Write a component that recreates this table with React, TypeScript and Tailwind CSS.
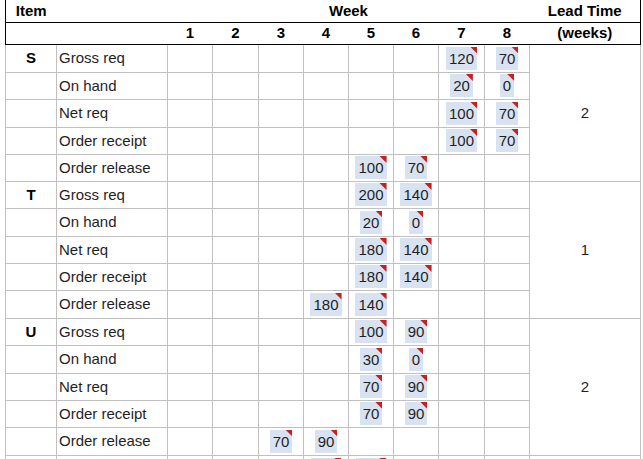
import React from 'react';

type Row = { label: string; values: Record<number, number> };
type Item = { name: string; lead: number; rows: Row[] };

// MRP record for items S, T, U
const items: Item[] = [
  {
    name: 'S',
    lead: 2,
    rows: [
      { label: 'Gross req', values: { 7: 120, 8: 70 } },
      { label: 'On hand', values: { 7: 20, 8: 0 } },
      { label: 'Net req', values: { 7: 100, 8: 70 } },
      { label: 'Order receipt', values: { 7: 100, 8: 70 } },
      { label: 'Order release', values: { 5: 100, 6: 70 } },
    ],
  },
  {
    name: 'T',
    lead: 1,
    rows: [
      { label: 'Gross req', values: { 5: 200, 6: 140 } },
      { label: 'On hand', values: { 5: 20, 6: 0 } },
      { label: 'Net req', values: { 5: 180, 6: 140 } },
      { label: 'Order receipt', values: { 5: 180, 6: 140 } },
      { label: 'Order release', values: { 4: 180, 5: 140 } },
    ],
  },
  {
    name: 'U',
    lead: 2,
    rows: [
      { label: 'Gross req', values: { 5: 100, 6: 90 } },
      { label: 'On hand', values: { 5: 30, 6: 0 } },
      { label: 'Net req', values: { 5: 70, 6: 90 } },
      { label: 'Order receipt', values: { 5: 70, 6: 90 } },
      { label: 'Order release', values: { 3: 70, 4: 90 } },
    ],
  },
];

const weekWidths = [45, 46, 45, 45, 45, 45, 46, 45];
const rowHeights = [28, 27, 28, 27, 27, 27, 28, 27, 27, 28, 27, 28, 27, 27, 28];

function Chip({ value }: { value: number }) {
  return (
    <span className="relative inline-block bg-[#d8e2f1] px-[3px] leading-[23px]">
      {value}
      <span className="absolute right-0 top-0 h-[7px] w-[7px] bg-[#c5221f] [clip-path:polygon(0_0,100%_0,100%_100%)]" />
    </span>
  );
}

// Top edge of a chip in the row cut off by the window
function ChipEdge() {
  return (
    <span className="relative inline-block h-[23px] w-[30px] bg-[#d8e2f1] align-top">
      <span className="absolute right-0 top-0 h-[7px] w-[7px] bg-[#c5221f] [clip-path:polygon(0_0,100%_0,100%_100%)]" />
    </span>
  );
}

export default function App() {
  let rowIndex = 0;

  return (
    <div className="h-[459px] w-[643px] overflow-hidden bg-white pl-[5px] font-['Liberation_Sans',Arial,sans-serif] text-[15px] leading-[18px] text-[#1f1f1f]">
      <table className="table-fixed border-collapse">
        <colgroup>
          <col className="w-[51px]" />
          <col className="w-[111px]" />
          {weekWidths.map((w, i) => (
            <col key={i} style={{ width: w }} />
          ))}
          <col className="w-[111px]" />
        </colgroup>
        <thead className="font-bold text-black">
          {/* Header row 1 */}
          <tr className="h-[22px]">
            <th className="border-b border-l border-black p-0 text-center font-bold">Item</th>
            <th className="border-b border-black p-0" />
            <th colSpan={8} className="border-b border-black p-0 text-center font-bold">
              Week
            </th>
            <th className="border-b border-r border-black p-0 text-center font-bold">Lead Time</th>
          </tr>
          {/* Header row 2 */}
          <tr className="h-[22px]">
            <th className="border-b border-l border-black p-0" />
            <th className="border-b border-black p-0" />
            {weekWidths.map((_, i) => (
              <th key={i} className="border-b border-black p-0 text-center font-bold">
                {i + 1}
              </th>
            ))}
            <th className="border-b border-r border-black p-0 text-center font-bold">(weeks)</th>
          </tr>
        </thead>
        <tbody>
          {items.map((item) =>
            item.rows.map((row, r) => {
              const h = rowHeights[rowIndex++] ?? 27;
              return (
                <tr key={item.name + r} style={{ height: h }}>
                  <td className="border border-[#c0c0c0] p-0 text-center font-bold text-black">
                    {r === 0 ? item.name : ''}
                  </td>
                  <td className="whitespace-nowrap border border-[#c0c0c0] py-0 pl-[2px] pr-0">
                    {row.label}
                  </td>
                  {weekWidths.map((_, i) => (
                    <td key={i} className="border border-[#c0c0c0] p-0 text-center">
                      {row.values[i + 1] !== undefined && <Chip value={row.values[i + 1]} />}
                    </td>
                  ))}
                  {r === 0 && (
                    <td rowSpan={item.rows.length} className="border border-[#c0c0c0] p-0 text-center">
                      {item.lead}
                    </td>
                  )}
                </tr>
              );
            })
          )}
          {/* Next item's first row, mostly below the window */}
          <tr className="h-[27px]">
            <td className="border border-[#c0c0c0] p-0" />
            <td className="border border-[#c0c0c0] p-0" />
            {weekWidths.map((_, i) => (
              <td key={i} className="border border-[#c0c0c0] px-0 pb-0 pt-[2px] text-center align-top">
                {(i === 3 || i === 4) && <ChipEdge />}
              </td>
            ))}
            <td className="border border-[#c0c0c0] p-0" />
          </tr>
        </tbody>
      </table>
    </div>
  );
}
